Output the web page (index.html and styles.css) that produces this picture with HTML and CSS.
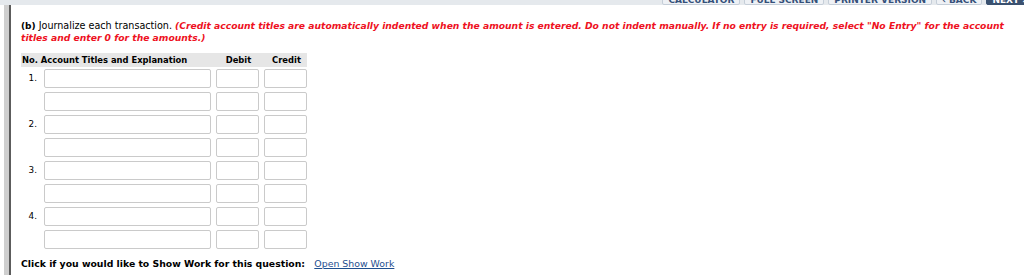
FILE: index.html
```html
<!DOCTYPE html>
<html lang="en">

<head>
    <meta charset="UTF-8">
    <title>Journalize each transaction</title>
    <link rel="stylesheet" href="styles.css">
</head>

<body>
    <!-- 顶部工具栏，只露出按钮底边 -->
    <div class="toolbar">
        <span class="tool">Calculator</span>
        <span class="tool">Full Screen</span>
        <span class="tool">Printer Version</span>
        <span class="tool">&lsaquo; Back</span>
        <span class="tool next">Next &rsaquo;</span>
    </div>

    <div class="frame">
        <div class="page">
            <p class="question">
                <b>(b)</b> Journalize each transaction.
                <em class="hint">(Credit account titles are automatically indented when the amount is entered. Do not indent manually. If no entry is required, select "No Entry" for the account titles and enter 0 for the amounts.)</em>
            </p>

            <div class="journal">
                <div class="head">
                    <span class="h-title">No. Account Titles and Explanation</span>
                    <span class="h-amt">Debit</span>
                    <span class="h-amt">Credit</span>
                </div>

                <span class="no">1.</span>
                <input class="acct" type="text"><input type="text"><input type="text">
                <span class="no"></span>
                <input class="acct" type="text"><input type="text"><input type="text">

                <span class="no">2.</span>
                <input class="acct" type="text"><input type="text"><input type="text">
                <span class="no"></span>
                <input class="acct" type="text"><input type="text"><input type="text">

                <span class="no">3.</span>
                <input class="acct" type="text"><input type="text"><input type="text">
                <span class="no"></span>
                <input class="acct" type="text"><input type="text"><input type="text">

                <span class="no">4.</span>
                <input class="acct" type="text"><input type="text"><input type="text">
                <span class="no"></span>
                <input class="acct" type="text"><input type="text"><input type="text">
            </div>

            <p class="showwork">
                Click if you would like to Show Work for this question:
                <a href="#">Open Show Work</a>
            </p>
        </div>
    </div>
</body>

</html>
```

FILE: styles.css
```css
* {
    margin: 0;
    padding: 0;
    box-sizing: border-box;
}

body {
    background-color: #fff;
    font-family: "DejaVu Sans", Verdana, sans-serif;
    font-size: 9.6px;
    color: #000;
}

/* 工具栏 */
.toolbar {
    height: 5px;
    overflow: hidden;
    background-color: #e5e9ed;
    display: flex;
    justify-content: flex-end;
    gap: 4px;
}

.tool {
    margin-top: -6px;
    height: 11px;
    line-height: 11px;
    padding: 0 5px;
    font-size: 9px;
    font-weight: bold;
    text-transform: uppercase;
    color: #35507a;
    background-color: #eef1f5;
    border: 1px solid #c5ced8;
    border-radius: 2px;
}

.next {
    background-color: #3a5170;
    border-color: #3a5170;
    color: #fff;
    margin-right: -8px;
}

/* 左边框 */
.frame {
    border-left: 5px solid #cfcfcf;
    margin-left: 4px;
    height: 270px;
}

.page {
    border-left: 2px solid #5c5c5c;
    height: 100%;
    padding: 15px 10px 0 10px;
}

.question {
    line-height: 11px;
}

.question b {
    font-size: 9px;
}

.hint {
    color: #ee1122;
    font-weight: bold;
    font-size: 9.2px;
}

/* 分录表 */
.journal {
    margin-top: 10px;
    display: grid;
    grid-template-columns: 18px 167px 43px 43px;
    column-gap: 5px;
    row-gap: 4px;
    width: 286px;
    font-size: 8.4px;
}

.head {
    grid-column: 1 / 5;
    display: grid;
    grid-template-columns: 190px 43px 43px;
    column-gap: 5px;
    height: 14px;
    line-height: 14px;
    background-color: #e6e6e6;
    font-weight: bold;
    margin-bottom: -2px;
    padding-left: 1px;
}

.h-amt {
    text-align: center;
}

.no {
    text-align: right;
    padding-right: 2px;
    line-height: 19px;
    font-size: 8.8px;
}

.journal input {
    height: 19px;
    width: 100%;
    border: 1px solid #cacaca;
    border-radius: 2px;
    background-color: #fff;
}

.showwork {
    margin-top: 9px;
    font-weight: bold;
    font-size: 9.3px;
}

.showwork a {
    font-weight: normal;
    font-size: 9.4px;
    color: #1f4f8f;
    margin-left: 6px;
}
```
